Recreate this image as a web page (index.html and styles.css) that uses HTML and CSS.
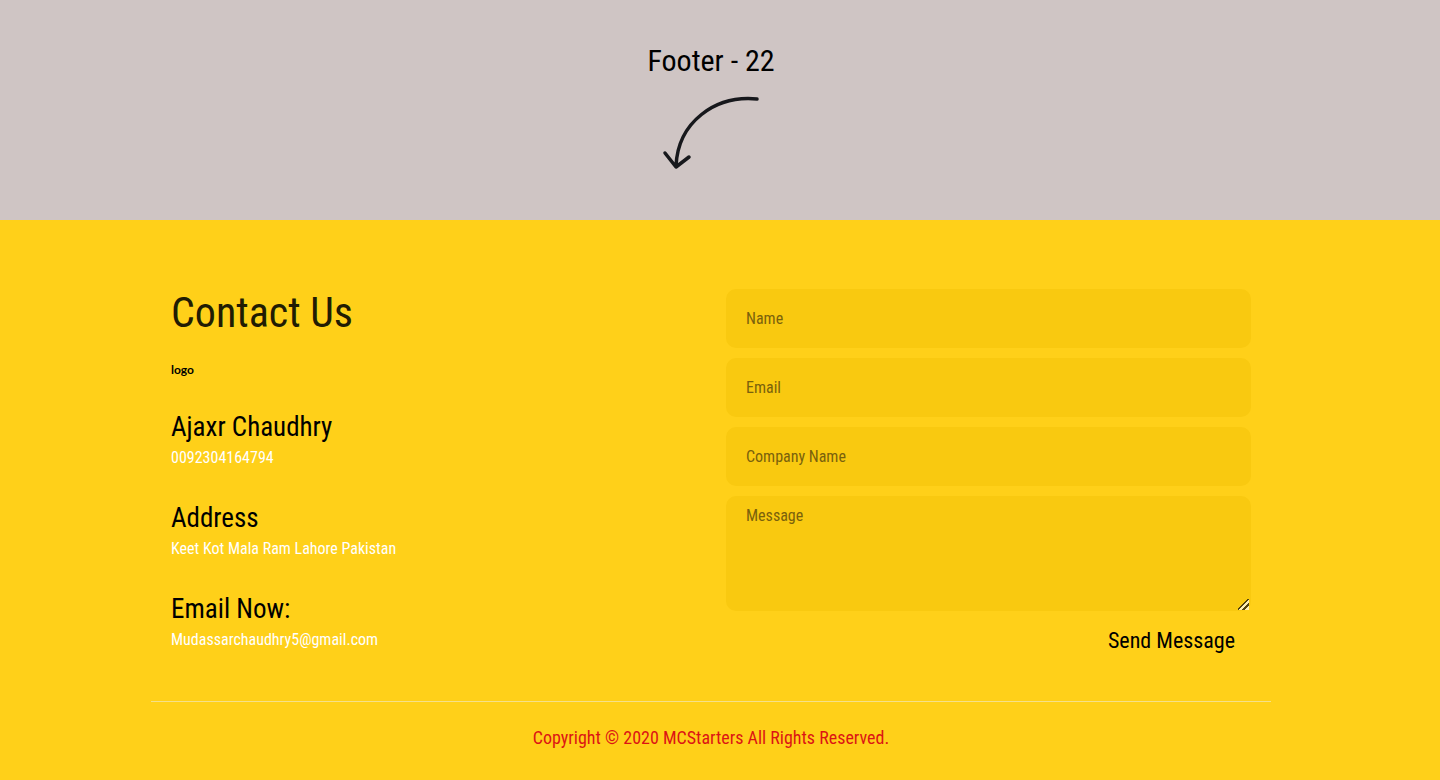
FILE: index.html
```html
<!DOCTYPE html>
<html lang="en">
<head>
<meta charset="utf-8">
<meta name="viewport" content="width=device-width, initial-scale=1">
<title>Footer - 22</title>
<link rel="stylesheet" href="styles.css">
</head>
<body>
<header class="intro">
  <h1 class="intro-title">Footer - 22</h1>
  <svg class="arrow" width="100" height="78" viewBox="0 0 100 78" aria-hidden="true">
    <path d="M96 6C54 2 17 29 15 73M4 60L15 74L28 64"/>
  </svg>
</header>
<footer class="footer">
  <div class="container">
    <div class="columns">
      <section class="contact">
        <h2 class="contact-title">Contact Us</h2>
        <a class="logo" href="#">logo</a>
        <div class="detail">
          <h3 class="detail-title">Ajaxr Chaudhry</h3>
          <p class="detail-text">0092304164794</p>
        </div>
        <div class="detail">
          <h3 class="detail-title">Address</h3>
          <p class="detail-text">Keet Kot Mala Ram Lahore Pakistan</p>
        </div>
        <div class="detail">
          <h3 class="detail-title">Email Now:</h3>
          <a class="detail-text" href="mailto:Mudassarchaudhry5@gmail.com">Mudassarchaudhry5@gmail.com</a>
        </div>
      </section>
      <form class="form">
        <input class="field" type="text" placeholder="Name" aria-label="Name">
        <input class="field" type="email" placeholder="Email" aria-label="Email">
        <input class="field" type="text" placeholder="Company Name" aria-label="Company Name">
        <textarea class="field message" placeholder="Message" aria-label="Message"></textarea>
        <button class="send" type="submit">Send Message</button>
      </form>
    </div>
    <p class="copyright">Copyright © 2020 MCStarters All Rights Reserved.</p>
  </div>
</footer>
</body>
</html>
```
FILE: styles.css
```css
* {
  box-sizing: border-box;
  margin: 0;
  padding: 0;
}

body {
  min-height: 100vh;
  display: flex;
  flex-direction: column;
  background: #ffd019;
  color: #000;
  font-family: "Roboto Condensed", "Liberation Sans Narrow", "Open Sans Condensed", "DejaVu Sans Condensed", sans-serif;
}

a {
  color: inherit;
  text-decoration: none;
}

.intro {
  display: flex;
  flex-direction: column;
  align-items: center;
  padding: 41px 18px 49px 0;
  background: #cfc5c4;
}

.intro-title {
  font-size: 30px;
  font-weight: 400;
  line-height: 40px;
  margin-bottom: 12px;
}

.arrow {
  fill: none;
  stroke: #17181c;
  stroke-width: 3.5;
  stroke-linecap: round;
  stroke-linejoin: round;
}

.footer {
  flex: 1;
  padding: 69px 18px 20px 0;
}

.container {
  max-width: 1120px;
  margin: 0 auto;
}

.columns {
  display: grid;
  grid-template-columns: 1fr 525px;
  gap: 30px;
  padding: 0 20px 40px;
  border-bottom: 1px solid #f5e08a;
}

.contact-title {
  font-size: 42px;
  font-weight: 400;
  line-height: 48px;
  color: #211c03;
}

.logo {
  display: block;
  margin-top: 25px;
  font-family: Lato, sans-serif;
  font-size: 12px;
  font-weight: 700;
  line-height: 16px;
}

.detail {
  margin-top: 29px;
}

.logo + .detail {
  margin-top: 31px;
}

.detail-title {
  font-size: 27px;
  font-weight: 400;
  line-height: 36px;
}

.detail-text {
  display: block;
  font-size: 16px;
  line-height: 26px;
  color: #fff;
}

.form {
  display: flex;
  flex-direction: column;
  gap: 10px;
}

.field {
  display: block;
  width: 100%;
  height: 59px;
  padding: 0 20px;
  border: 0;
  border-radius: 10px;
  outline: 0;
  background: #f9c910;
  color: #211c03;
  font-family: inherit;
  font-size: 16px;
}

.field::placeholder {
  color: #7a610c;
  opacity: 1;
}

.message {
  height: 115px;
  padding: 8px 20px;
  line-height: 24px;
  resize: both;
}

.message::-webkit-resizer {
  background: linear-gradient(135deg, transparent 42%, #54440d 42% 54%, #fdefb5 54% 68%, #54440d 68% 80%, #fdefb5 80%) right 2px bottom 1px / 11px 11px no-repeat;
}

.send {
  align-self: flex-end;
  margin-right: 16px;
  border: 0;
  background: none;
  color: #000;
  font-family: inherit;
  font-size: 22px;
  line-height: 40px;
  cursor: pointer;
}

.copyright {
  padding-top: 24px;
  color: #dc1414;
  font-size: 18px;
  line-height: 24px;
  text-align: center;
}
```
